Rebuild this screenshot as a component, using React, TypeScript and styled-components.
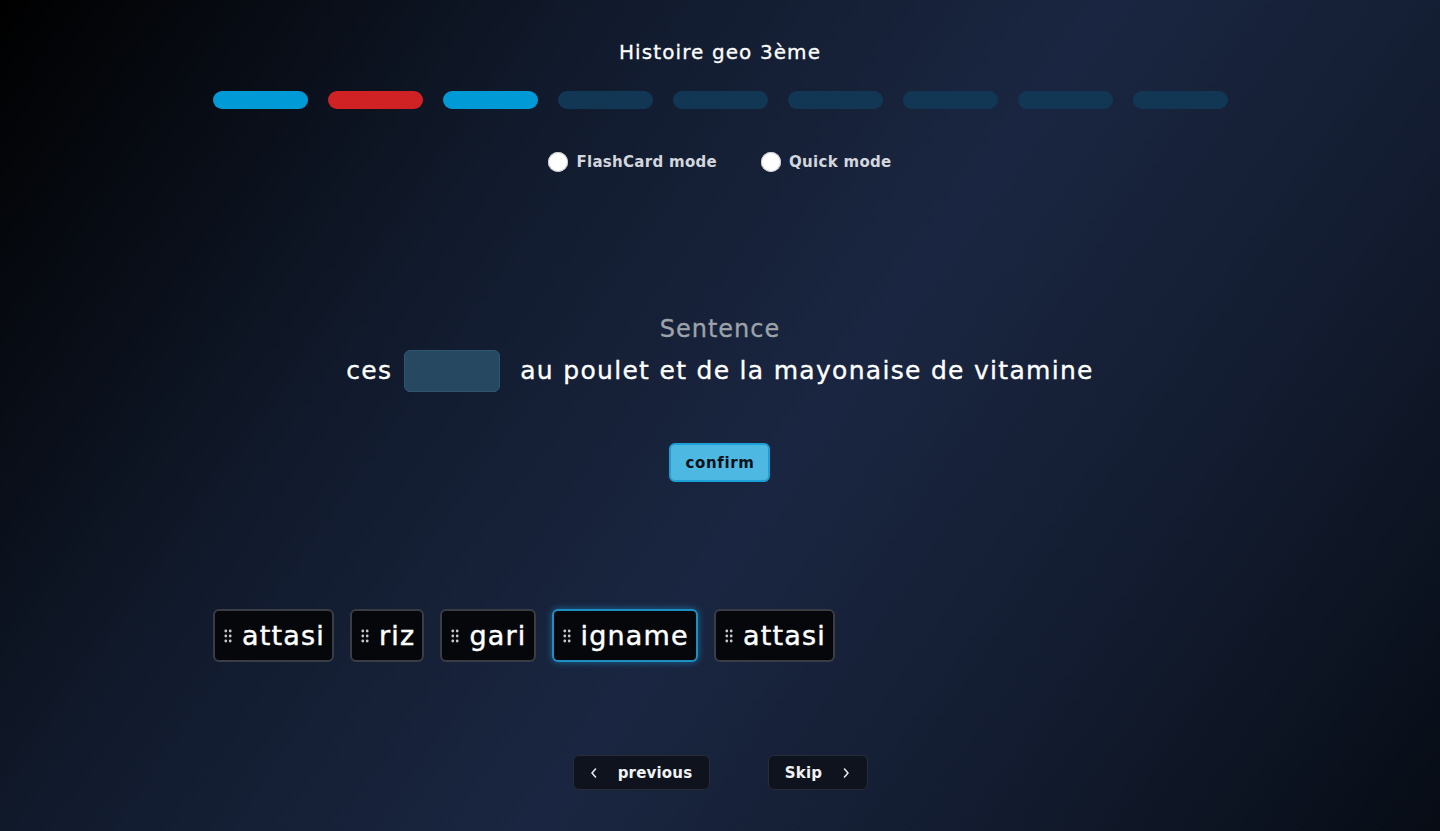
import React from 'react';
import styled, { createGlobalStyle } from 'styled-components';

const GlobalStyle = createGlobalStyle`
	html, body {
		margin: 0;
		padding: 0;
		height: 100%;
	}
	body {
		font-family: 'DejaVu Sans', Inter, sans-serif;
		color: #fff;
	}
`;

const Page = styled.main`
	min-height: 831px;
	height: 831px;
	box-sizing: border-box;
	background: linear-gradient(125deg, #000000 0%, #111a2c 30%, #1a2641 55%, #121b2e 78%, #070c15 100%);
	display: flex;
	flex-direction: column;
	align-items: center;
	padding-top: 39px;
	overflow: hidden;
`;

const Title = styled.h1`
	margin: 0;
	font-size: 20px;
	line-height: 26px;
	font-weight: 400;
	letter-spacing: 1.1px;
	-webkit-text-stroke: 0.3px #fff;
`;

const Progress = styled.div`
	display: flex;
	gap: 20px;
	margin-top: 26px;
`;

const Step = styled.div<{ $state: 'ok' | 'bad' | 'todo' }>`
	width: 95px;
	height: 18px;
	border-radius: 9px;
	background: ${(p) => (p.$state === 'ok' ? '#009ad6' : p.$state === 'bad' ? '#d02224' : '#123754')};
`;

const Modes = styled.div`
	display: flex;
	gap: 44px;
	margin-top: 43px;
`;

const Mode = styled.label`
	display: flex;
	align-items: center;
	gap: 8px;
	font-size: 15px;
	font-weight: 700;
	letter-spacing: 0.3px;
	color: #d3d6dc;
`;

const Radio = styled.span`
	width: 20px;
	height: 20px;
	border-radius: 50%;
	background: #fff;
	box-shadow: inset 0 0 0 1px #c9ccd2;
`;

const Question = styled.section`
	display: flex;
	flex-direction: column;
	align-items: center;
	margin-top: 142px;
`;

const Label = styled.div`
	font-size: 24px;
	font-weight: 400;
	letter-spacing: 1px;
	color: #9ea2aa;
	-webkit-text-stroke: 0.3px #9ea2aa;
	line-height: 30px;
`;

const Sentence = styled.div`
	display: flex;
	align-items: center;
	gap: 12px;
	margin-top: 6px;
	font-size: 25px;
	font-weight: 400;
	letter-spacing: 1.3px;
	-webkit-text-stroke: 0.35px #fff;
	line-height: 42px;
`;

const Blank = styled.span`
	display: inline-block;
	width: 96px;
	height: 42px;
	box-sizing: border-box;
	border-radius: 6px;
	background: #264861;
	border: 1px solid #2f5671;
	margin-right: 8px;
`;

const Confirm = styled.button`
	margin-top: 51px;
	width: 101px;
	height: 39px;
	border-radius: 6px;
	border: 2px solid #1ba1d8;
	background: #4db8e2;
	color: #0b1018;
	font-family: inherit;
	font-size: 15px;
	font-weight: 700;
	letter-spacing: 0.6px;
`;

const Bank = styled.div`
	width: 1014px;
	display: flex;
	gap: 16px;
	margin-top: 127px;
`;

const Chip = styled.div<{ $active?: boolean }>`
	height: 53px;
	box-sizing: border-box;
	display: flex;
	align-items: center;
	gap: 10px;
	padding: 0 7px 0 9px;
	border-radius: 6px;
	background: #05070b;
	border: 2px solid ${(p) => (p.$active ? '#1c90c2' : '#3a3d44')};
	box-shadow: ${(p) => (p.$active ? '0 0 7px rgba(30, 150, 210, 0.6)' : 'none')};
	font-size: 27px;
	font-weight: 400;
	letter-spacing: 1.2px;
	-webkit-text-stroke: 0.45px #fff;
	color: #fff;
`;

const Nav = styled.nav`
	display: flex;
	gap: 58px;
	margin-top: 93px;
`;

const NavButton = styled.button<{ $w: number }>`
	width: ${(p) => p.$w}px;
	height: 35px;
	display: flex;
	align-items: center;
	justify-content: center;
	gap: 20px;
	border-radius: 6px;
	border: 1px solid #272c36;
	background: #0e131d;
	color: #f1f2f4;
	font-family: inherit;
	font-size: 15px;
	font-weight: 700;
	letter-spacing: 0.2px;
`;

const Grip = () => (
	<svg width="8" height="14" viewBox="0 0 8 14">
		{[1.8, 6.2].map((x) => [2, 7, 12].map((y) => <circle key={`${x}-${y}`} cx={x} cy={y} r="1.4" fill="#c4c7cc" />))}
	</svg>
);

const Chevron = ({ dir }: { dir: 'l' | 'r' }) => (
	<svg width="8" height="12" viewBox="0 0 8 12" fill="none" stroke="#e6e8eb" strokeWidth="1.6" strokeLinecap="round" strokeLinejoin="round">
		<path d={dir === 'l' ? 'M5.5 2 L2 6 L5.5 10' : 'M2.5 2 L6 6 L2.5 10'} />
	</svg>
);

const steps: ('ok' | 'bad' | 'todo')[] = ['ok', 'bad', 'ok', 'todo', 'todo', 'todo', 'todo', 'todo', 'todo'];
const words = ['attasi', 'riz', 'gari', 'igname', 'attasi'];

export default function App() {
	return (
		<Page>
			<GlobalStyle />
			<Title>Histoire geo 3ème</Title>
			<Progress>
				{steps.map((s, i) => (
					<Step key={i} $state={s} />
				))}
			</Progress>
			<Modes>
				<Mode>
					<Radio />
					FlashCard mode
				</Mode>
				<Mode>
					<Radio />
					Quick mode
				</Mode>
			</Modes>
			<Question>
				<Label>Sentence</Label>
				<Sentence>
					<span>ces</span>
					<Blank />
					<span>au poulet et de la mayonaise de vitamine</span>
				</Sentence>
				<Confirm>confirm</Confirm>
			</Question>
			<Bank>
				{words.map((w, i) => (
					<Chip key={i} $active={i === 3}>
						<Grip />
						{w}
					</Chip>
				))}
			</Bank>
			<Nav>
				<NavButton $w={137}>
					<Chevron dir="l" />
					previous
				</NavButton>
				<NavButton $w={100}>
					Skip
					<Chevron dir="r" />
				</NavButton>
			</Nav>
		</Page>
	);
}
